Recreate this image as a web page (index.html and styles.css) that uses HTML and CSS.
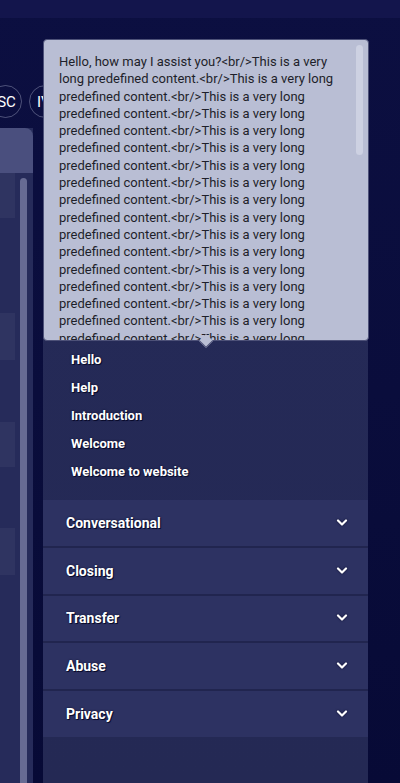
FILE: index.html
```html
<!DOCTYPE html>
<html lang="en">
<head>
<meta charset="utf-8">
<link rel="stylesheet" href="styles.css">
</head>
<body>
<div class="topbar"></div>
<div class="stage">
  <div class="chips">
    <span class="chip">SC</span>
    <span class="chip">IV</span>
  </div>
  <div class="columns">
    <aside class="side">
      <div class="side-head"></div>
      <div class="side-body">
        <div class="cells">
          <div class="cell c1"></div>
          <div class="cell c2"></div>
          <div class="cell c3"></div>
          <div class="cell c4"></div>
        </div>
        <div class="track"></div>
      </div>
    </aside>
    <section class="panel">
      <ul class="items">
        <li>Hello</li>
        <li>Help</li>
        <li>Introduction</li>
        <li>Welcome</li>
        <li>Welcome to website</li>
      </ul>
      <div class="acc">
        <div class="acc-row"><span>Conversational</span><svg class="chev" viewBox="0 0 12 8" width="12" height="8"><polyline points="2,1.5 6,5.5 10,1.5"/></svg></div>
        <div class="acc-row"><span>Closing</span><svg class="chev" viewBox="0 0 12 8" width="12" height="8"><polyline points="2,1.5 6,5.5 10,1.5"/></svg></div>
        <div class="acc-row"><span>Transfer</span><svg class="chev" viewBox="0 0 12 8" width="12" height="8"><polyline points="2,1.5 6,5.5 10,1.5"/></svg></div>
        <div class="acc-row"><span>Abuse</span><svg class="chev" viewBox="0 0 12 8" width="12" height="8"><polyline points="2,1.5 6,5.5 10,1.5"/></svg></div>
        <div class="acc-row"><span>Privacy</span><svg class="chev" viewBox="0 0 12 8" width="12" height="8"><polyline points="2,1.5 6,5.5 10,1.5"/></svg></div>
      </div>
    </section>
  </div>
</div>
<div class="tooltip">
  <div class="tip-box">
    <p class="tip-text">Hello, how may I assist you?&lt;br/&gt;This is a very long predefined content.&lt;br/&gt;This is a very long predefined content.&lt;br/&gt;This is a very long predefined content.&lt;br/&gt;This is a very long predefined content.&lt;br/&gt;This is a very long predefined content.&lt;br/&gt;This is a very long predefined content.&lt;br/&gt;This is a very long predefined content.&lt;br/&gt;This is a very long predefined content.&lt;br/&gt;This is a very long predefined content.&lt;br/&gt;This is a very long predefined content.&lt;br/&gt;This is a very long predefined content.&lt;br/&gt;This is a very long predefined content.&lt;br/&gt;This is a very long predefined content.&lt;br/&gt;This is a very long predefined content.&lt;br/&gt;This is a very long predefined content.&lt;br/&gt;This is a very long predefined content.&lt;br/&gt;This is a very long predefined content.&lt;br/&gt;This is a very long predefined content.&lt;br/&gt;This is a very long predefined content.</p>
    <div class="tip-thumb"></div>
  </div>
  <div class="tip-arrow"></div>
</div>
</body>
</html>
```
FILE: styles.css
```css
* { box-sizing: border-box; }
html, body { margin: 0; padding: 0; }
body {
  width: 400px;
  height: 783px;
  overflow: hidden;
  position: relative;
  font-family: Roboto, "Liberation Sans", sans-serif;
  background: linear-gradient(180deg, #0c0f41 0%, #0a0d3c 50%, #070a36 100%);
}
.topbar {
  height: 18px;
  background: #13154c;
}
.stage {
  padding-top: 67px;
}
.chips {
  display: flex;
  gap: 7px;
  margin-left: -11px;
  height: 33px;
}
.chip {
  width: 33px;
  height: 33px;
  flex: none;
  border-radius: 50%;
  border: 1px solid rgba(200, 205, 230, 0.35);
  color: #ffffff;
  font-size: 15px;
  display: flex;
  align-items: center;
  justify-content: center;
  padding-left: 2px;
}
.chip + .chip { padding-left: 7px; justify-content: flex-start; }
.columns {
  margin-top: 10px;
  display: flex;
  gap: 10px;
  height: 655px;
}
.side {
  width: 33px;
  display: flex;
  flex-direction: column;
  background: #262b5a;
}
.side-head {
  height: 45px;
  background: #4a4f7e;
  border-top-right-radius: 8px;
}
.side-body {
  flex: 1;
  display: flex;
  gap: 5px;
}
.cells {
  width: 15px;
  display: flex;
  flex-direction: column;
}
.cell { background: #2f3461; }
.c1 { height: 45px; }
.c2 { height: 47px; margin-top: 95px; }
.c3 { height: 45px; margin-top: 62px; }
.c4 { height: 47px; margin-top: 61px; }
.track {
  width: 7px;
  margin-top: 5px;
  background: #676b93;
  border-radius: 4px 4px 0 0;
}
.panel {
  width: 325px;
  background: linear-gradient(180deg, #252a58 0%, #242954 100%);
  padding-top: 218px;
}
.items {
  list-style: none;
  margin: 0;
  padding: 0 0 14px 28px;
}
.items li,
.acc-row span {
  color: #ffffff;
  font-weight: 700;
  text-shadow: 0 0 2px #0a0c2c, 1px 1px 0 #0a0c2c;
}
.items li {
  font-size: 13px;
  height: 28px;
  line-height: 28px;
}
.acc {
  display: flex;
  flex-direction: column;
}
.acc-row {
  height: 47.75px;
  display: flex;
  align-items: center;
  justify-content: space-between;
  padding: 0 20px 0 23px;
  background: #2d3262;
  border-bottom: 2px solid #21254f;
}
.acc-row span { font-size: 14px; }
.acc-row:last-child { border-bottom: none; height: 45.75px; }
.chev {
  fill: none;
  stroke: #ffffff;
  stroke-width: 2.2;
  stroke-linecap: round;
  stroke-linejoin: round;
  filter: drop-shadow(0 0 1px #0a0c2c);
}
.tooltip {
  position: absolute;
  left: 43px;
  top: 39px;
  width: 326px;
  height: 302px;
}
.tip-box {
  position: relative;
  height: 100%;
  background: #b9bed4;
  border: 1px solid #4d5178;
  border-radius: 4px;
  overflow: hidden;
  padding: 13px 30px 0 15px;
}
.tip-text {
  margin: 0;
  font-size: 13px;
  line-height: 17.3px;
  color: #1e1f2a;
}
.tip-thumb {
  position: absolute;
  right: 5px;
  top: 5px;
  width: 7px;
  height: 110px;
  border-radius: 4px;
  background: #cdd1e2;
}
.tip-arrow {
  position: absolute;
  left: 158px;
  bottom: -5px;
  width: 10px;
  height: 10px;
  background: #b9bed4;
  border-right: 1px solid #4d5178;
  border-bottom: 1px solid #4d5178;
  transform: rotate(45deg);
}
```
